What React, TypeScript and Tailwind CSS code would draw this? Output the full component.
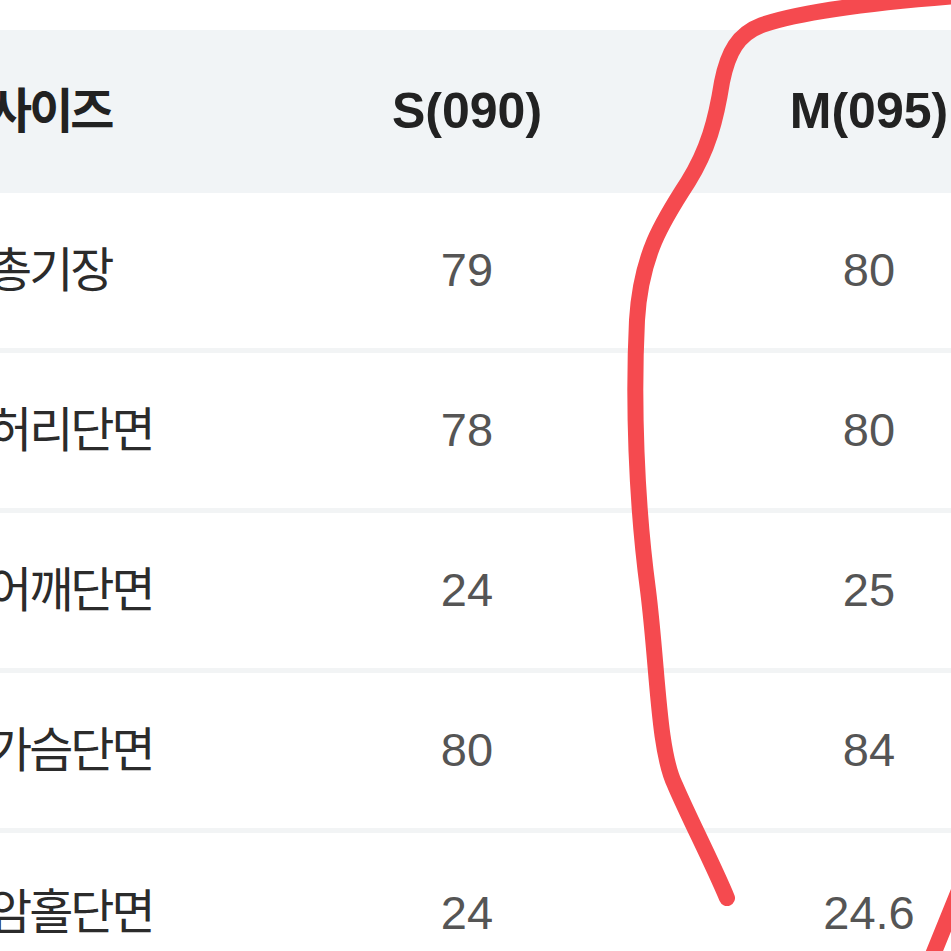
const rows: [string, string, string][] = [
  ['총기장', '79', '80'],
  ['허리단면', '78', '80'],
  ['어깨단면', '24', '25'],
  ['가슴단면', '80', '84'],
  ['암홀단면', '24', '24.6'],
]

const font = "font-['Liberation_Sans','Noto_Sans_CJK_KR',sans-serif]"

export default function App() {
  return (
    <div className={`relative h-[951px] w-[951px] overflow-hidden bg-white ${font}`}>
      <div className="ml-[-12px] pt-[30px]">
        {/* header */}
        <div className="flex h-[163px] items-center bg-[#f1f4f6] text-[#222]">
          <div className="w-[278px] shrink-0 text-[48px] font-semibold tracking-[-3px]">사이즈</div>
          <div className="w-[402px] shrink-0 text-center text-[50px] font-bold">S(090)</div>
          <div className="w-[402px] shrink-0 text-center text-[50px] font-bold">M(095)</div>
        </div>

        {rows.map(([label, s, m], i) => (
          <div
            key={label}
            className={`flex h-[160px] items-center text-[47px] ${i < rows.length - 1 ? 'border-b-[5px] border-[#f2f4f5]' : ''}`}
          >
            <div className="w-[278px] shrink-0 text-[48px] tracking-[-3px] text-[#2b2b2b]">{label}</div>
            <div className="w-[402px] shrink-0 text-center text-[#555]">{s}</div>
            <div className="w-[402px] shrink-0 text-center text-[#555]">{m}</div>
          </div>
        ))}
      </div>

      {/* hand-drawn marker circle */}
      <svg className="pointer-events-none absolute inset-0" width="951" height="951" viewBox="0 0 951 951">
        <path
          d="M958 -4 C880 2, 800 12, 762 25 C738 34, 728 52, 722 82 C716 120, 708 150, 688 182 C662 222, 641 255, 637 320 C633 400, 636 500, 648 590 C658 670, 658 750, 675 785 C690 820, 712 862, 727 898"
          fill="none"
          stroke="#f54a4f"
          strokeWidth="16"
          strokeLinecap="round"
          strokeLinejoin="round"
        />
        <path d="M958 893 L930 962" fill="none" stroke="#f54a4f" strokeWidth="16" strokeLinecap="round" />
      </svg>
    </div>
  )
}
